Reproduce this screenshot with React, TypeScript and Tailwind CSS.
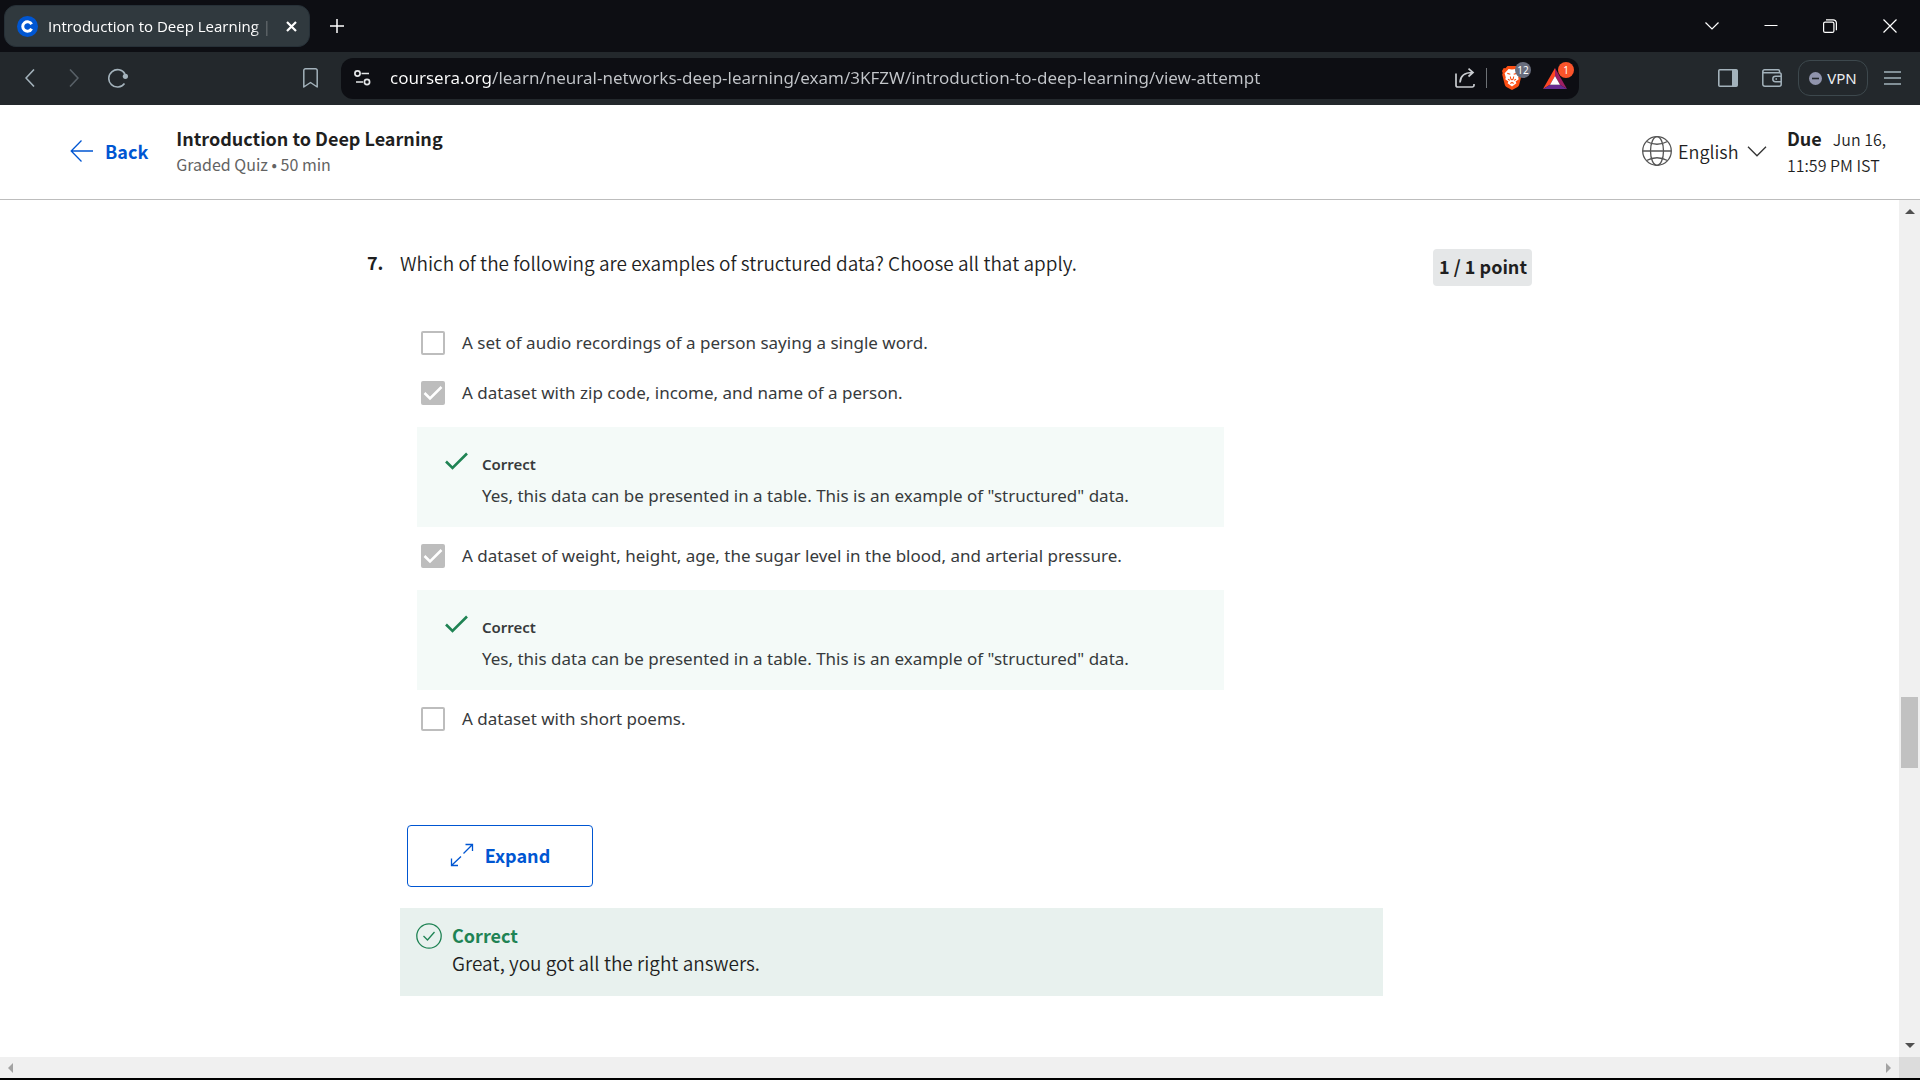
import React from "react";

function CourseraMark() {
  return (
    <svg viewBox="0 0 21 21" className="size-[21px] shrink-0" aria-hidden="true">
      <circle cx="10.500" cy="10.500" r="10.500" fill="#0056d2" />
      <path d="M14.600 8.300A4.700 4.700 0 1 0 14.600 12.700" fill="none" stroke="#fff" strokeWidth="3" />
    </svg>
  );
}

function TabStrip() {
  return (
    <div className="flex h-[52px] shrink-0 items-center bg-[#0d0e13] text-white">
      <div className="ml-1 flex h-[42px] w-[306px] items-center rounded-xl border border-[#263037] bg-[#30393e] pr-1 pl-3">
        <CourseraMark />
        <span className="ml-[10px] w-[222px] overflow-hidden font-['Open_Sans',sans-serif] text-[15px] leading-5 whitespace-nowrap [mask-image:linear-gradient(to_right,#000_205px,transparent_224px)]">
          Introduction to Deep Learning | Coursera
        </span>
        <button type="button" aria-label="Close tab" className="ml-auto grid size-7 place-items-center">
          <svg viewBox="0 0 11 11" className="size-[11px]" fill="none" stroke="currentColor" strokeWidth="2.200">
            <path d="M1 1l9 9M10 1L1 10" />
          </svg>
        </button>
      </div>
      <button type="button" aria-label="New tab" className="ml-[11px] grid size-8 place-items-center">
        <svg viewBox="0 0 14 14" className="size-[14px]" fill="none" stroke="currentColor" strokeWidth="1.500">
          <path d="M7 0v14M0 7h14" />
        </svg>
      </button>
      <div className="ml-auto flex items-center">
        <button type="button" aria-label="Search tabs" className="grid h-10 w-[59px] place-items-center">
          <svg viewBox="0 0 14 14" className="size-[14px]" fill="none" stroke="currentColor" strokeWidth="1.200">
            <path d="M.5 3.500L7 10l6.500-6.500" />
          </svg>
        </button>
        <button type="button" aria-label="Minimize" className="grid h-10 w-[59px] place-items-center">
          <svg viewBox="0 0 14 14" className="size-[14px]" stroke="currentColor" strokeWidth="1">
            <path d="M0.500 6.500h13" />
          </svg>
        </button>
        <button type="button" aria-label="Restore" className="grid h-10 w-[59px] place-items-center">
          <svg viewBox="0 0 14 14" className="size-[14px]" fill="none" stroke="currentColor" strokeWidth="1.200">
            <rect x="0.600" y="3.100" width="10.300" height="10.300" rx="1.500" />
            <path d="M3 .8h7.200a3.200 3.200 0 0 1 3.200 3.200v7.200" />
          </svg>
        </button>
        <button type="button" aria-label="Close" className="grid h-10 w-[61px] place-items-center">
          <svg viewBox="0 0 14 14" className="size-[14px]" fill="none" stroke="currentColor" strokeWidth="1.200">
            <path d="M.5.5l13 13M13.500.5l-13 13" />
          </svg>
        </button>
      </div>
    </div>
  );
}

function BraveIcon() {
  return (
    <svg viewBox="0 0 20 24" className="h-6 w-5" aria-hidden="true">
      <path
        d="M5.500 0h9l2 2.200 1.800-.3L20 5l-.7 2 .5 1.500-2.600 10.300a4 4 0 0 1-1.600 2.300L11 23.600a1.800 1.800 0 0 1-2 0l-4.600-2.500a4 4 0 0 1-1.600-2.300L.2 8.500.700 7 0 5l1.700-3.100 1.800.3z"
        fill="#fb4f14"
      />
      <path
        d="M10 3.600l3.400-.6 4 4.200-1.200 4.300.5 1.800-3.100 2.200.8 1.800-4.400 3.100-4.400-3.100.8-1.800-3.100-2.200.5-1.800L2.600 7.200l4-4.200z"
        fill="#fff"
      />
      <path
        d="M5.300 7.400l3 .8M14.700 7.400l-3 .8M8.300 10.500l.5 2.500L10 13.800l1.200-.8.5-2.500M6 13.200l2 1.200M14 13.200l-2 1.200M8.300 17.500l1.700-1 1.700 1"
        fill="none"
        stroke="#fb4f14"
        strokeWidth="1.100"
      />
    </svg>
  );
}

function BatIcon() {
  return (
    <svg viewBox="0 0 24 21" className="h-[21px] w-6" aria-hidden="true">
      <path d="M12 0L0 21l7-4.200L12 8z" fill="#ff4724" />
      <path d="M12 0l12 21-7-4.200L12 8z" fill="#9e1f63" />
      <path d="M0 21h24l-7-4.200H7z" fill="#662d91" />
      <path d="M12 8l5 8.800H7z" fill="#fff" />
    </svg>
  );
}

function Toolbar() {
  return (
    <div className="flex h-[53px] shrink-0 items-center bg-[#23282c] pb-px text-[#a3b2bb]">
      <div className="flex items-center pl-2">
        <button type="button" aria-label="Go back" className="grid h-9 w-11 place-items-center">
          <svg viewBox="0 0 10 18" className="h-[18px] w-[10px]" fill="none" stroke="currentColor" strokeWidth="1.600">
            <path d="M9 .5L1 9l8 8.500" />
          </svg>
        </button>
        <button type="button" aria-label="Go forward" className="grid h-9 w-11 place-items-center text-[#586067]">
          <svg viewBox="0 0 10 18" className="h-[18px] w-[10px]" fill="none" stroke="currentColor" strokeWidth="1.600">
            <path d="M1 .5L9 9l-8 8.500" />
          </svg>
        </button>
        <button type="button" aria-label="Reload" className="grid h-9 w-11 place-items-center">
          <svg viewBox="0 0 20 20" className="size-5" fill="none" stroke="currentColor" strokeWidth="1.600">
            <path d="M17 6A8.700 8.700 0 1 0 16.500 15.500" />
            <circle cx="17.400" cy="8.300" r="2.600" fill="currentColor" stroke="none" />
          </svg>
        </button>
      </div>
      <button type="button" aria-label="Bookmark this page" className="ml-[152px] grid h-9 w-9 place-items-center">
        <svg viewBox="0 0 15 20" className="h-5 w-[15px]" fill="none" stroke="currentColor" strokeWidth="1.500">
          <path d="M.8 2.500A1.700 1.700 0 0 1 2.500.8h10a1.700 1.700 0 0 1 1.700 1.700V19L7.500 14.500.8 19z" strokeLinejoin="round" />
        </svg>
      </button>
      <div className="ml-[13px] flex h-[41px] min-w-0 flex-1 items-center rounded-xl bg-[#0d0e13] pr-2 pl-3">
        <button type="button" aria-label="Site settings" className="grid h-8 w-[18px] shrink-0 place-items-center text-[#e4e6e8]">
          <svg viewBox="0 0 17 16" className="h-4 w-[17px]" fill="none" stroke="currentColor" strokeWidth="1.700">
            <circle cx="3.500" cy="3.500" r="2.600" />
            <path d="M7.500 3.500H15M2 12h7" />
            <circle cx="13" cy="12" r="2.600" />
          </svg>
        </button>
        <input
          type="text"
          aria-label="Address"
          readOnly
          value="coursera.org/learn/neural-networks-deep-learning/exam/3KFZW/introduction-to-deep-learning/view-attempt"
          className="ml-[19px] min-w-0 flex-1 bg-[linear-gradient(to_right,#ffffff_101px,#c3c6ca_101px)] bg-clip-text text-[17px] text-transparent outline-none"
        />
        <button type="button" aria-label="Share" className="grid h-8 w-8 place-items-center text-[#c9ccd0]">
          <svg viewBox="0 0 20 20" className="size-5" fill="none" stroke="currentColor" strokeWidth="1.700">
            <path d="M1 5.500v11.700A1.800 1.800 0 0 0 2.800 19h14.400a1.800 1.800 0 0 0 1.800-1.800V16" />
            <path d="M5 14.500C5.300 8 9 4.500 17.500 4.500M13.500.7l4.500 3.800-4.500 4" />
          </svg>
        </button>
        <span className="ml-[5px] h-5 w-px bg-[#6d7175]" />
        <button type="button" aria-label="Brave Shields, 12 blocked" className="relative ml-[9px] grid h-9 w-8 place-items-center">
          <BraveIcon />
          <span className="absolute top-[2px] left-[19px] grid size-4 place-items-center rounded-full bg-[#686d7d] text-[10px] leading-4 text-white">
            12
          </span>
        </button>
        <button type="button" aria-label="Brave Rewards, 1 new" className="relative ml-[11px] grid h-9 w-8 place-items-center">
          <BatIcon />
          <span className="absolute top-[2px] left-[19px] grid size-4 place-items-center rounded-full bg-[#fb542b] text-[10px] leading-4 text-white">
            1
          </span>
        </button>
      </div>
      <div className="flex w-[341px] shrink-0 items-center justify-end pr-[6px]">
        <button type="button" aria-label="Show sidebar" className="grid h-9 w-11 place-items-center">
          <svg viewBox="0 0 20 18" className="h-[18px] w-5" fill="none" stroke="currentColor" strokeWidth="1.600">
            <rect x=".8" y=".8" width="18.400" height="16.400" rx="1" />
            <path d="M14 1h5v16h-5z" fill="currentColor" stroke="none" />
          </svg>
        </button>
        <button type="button" aria-label="Wallet" className="grid h-9 w-11 place-items-center">
          <svg viewBox="0 0 20 18" className="h-[18px] w-5" fill="none" stroke="currentColor" strokeWidth="1.500">
            <path d="M17.500 3.500V2A1.200 1.200 0 0 0 16.300.8H2.500A1.700 1.700 0 0 0 .8 2.500v12.700a2 2 0 0 0 2 2h14.400a2 2 0 0 0 2-2V5.700a2 2 0 0 0-2-2H2.500A1.500 1.500 0 0 1 .8 2.300" />
            <path d="M19 7.300h-5.500a2.700 2.700 0 0 0 0 5.400H19M13.500 10h1.500" />
          </svg>
        </button>
        <button
          type="button"
          className="ml-1 flex h-9 w-[70px] items-center justify-center gap-[5px] rounded-xl border border-[#3d484d] text-[15px] text-[#eceef0]"
        >
          <svg viewBox="0 0 13 13" className="size-[13px]" aria-hidden="true">
            <circle cx="6.500" cy="6.500" r="6.500" fill="#9094ac" />
            <path d="M3 6.500h7" stroke="#23282c" strokeWidth="1.600" />
          </svg>
          VPN
        </button>
        <button type="button" aria-label="Menu" className="ml-[2px] grid h-9 w-11 place-items-center">
          <svg viewBox="0 0 17 14" className="h-[14px] w-[17px]" stroke="currentColor" strokeWidth="1.500">
            <path d="M0 1h17M0 7h17M0 13h17" />
          </svg>
        </button>
      </div>
    </div>
  );
}

function QuizHeader() {
  return (
    <header className="flex h-[95px] shrink-0 items-center border-b border-[#bdbdbd] bg-white pr-[22px] pb-[2px] pl-[70px] font-['Noto_Sans_CJK_JP',sans-serif] text-[#1f1f1f]">
      <a href="#back" className="flex items-center gap-3 text-lg font-bold text-[#0056d2]">
        <svg viewBox="0 0 23 22" className="h-[22px] w-[23px]" fill="none" stroke="currentColor" strokeWidth="1.300" aria-hidden="true">
          <path d="M23 11H1.500M11.500.5L1.200 11l10.300 10.500" />
        </svg>
        Back
      </a>
      <div className="ml-7">
        <h1 className="text-lg leading-[26px] font-bold">Introduction to Deep Learning</h1>
        <p className="text-base leading-[26px] text-[#636363]">Graded Quiz • 50 min</p>
      </div>
      <label className="ml-auto flex items-center">
        <svg viewBox="0 0 30 30" className="size-[30px] shrink-0" fill="none" stroke="#555" strokeWidth="1.300" aria-hidden="true">
          <circle cx="15" cy="15" r="14.300" />
          <ellipse cx="15" cy="15" rx="6.500" ry="14.300" />
          <path d="M.7 15h28.600M4.500 5.500Q15 11 25.500 5.500M4.500 24.500Q15 19 25.500 24.500" />
        </svg>
        <span className="grid items-center">
          <select
            aria-label="Language"
            className="appearance-none bg-transparent pr-7 pl-[6px] text-lg font-[350] outline-none [grid-area:1/1]"
          >
            <option>English</option>
          </select>
          <svg
            viewBox="0 0 20 11"
            className="pointer-events-none h-[11px] w-5 justify-self-end [grid-area:1/1]"
            fill="none"
            stroke="#333"
            strokeWidth="1.300"
            aria-hidden="true"
          >
            <path d="M1 .8l9 9 9-9" />
          </svg>
        </span>
      </label>
      <div className="ml-5 w-[111px] text-base leading-[26px] font-[350]">
        <div className="flex items-baseline gap-[11px]">
          <strong className="text-lg leading-[26px] font-bold">Due</strong>
          <span>Jun 16,</span>
        </div>
        <p>11:59 PM IST</p>
      </div>
    </header>
  );
}

function Option({ text, checked = false }: { text: string; checked?: boolean }) {
  return (
    <label className="flex h-[50px] items-center gap-[17px] pl-1 text-[17px] text-[#373a3c]">
      <span className="grid">
        <input
          type="checkbox"
          disabled
          checked={checked}
          readOnly
          className="size-6 appearance-none rounded-[2px] border-2 border-[#bdbdbd] bg-white checked:bg-[#bdbdbd] [grid-area:1/1]"
        />
        {checked && (
          <svg viewBox="0 0 24 24" className="size-6 [grid-area:1/1]" fill="none" stroke="#fff" strokeWidth="2.500" aria-hidden="true">
            <path d="M3.500 12l5.500 5.500L20.500 6" />
          </svg>
        )}
      </span>
      {text}
    </label>
  );
}

function Feedback() {
  return (
    <div className="mt-[9px] mb-1 flex h-[100px] max-w-[807px] gap-[13px] bg-[#f4faf8] pt-[21px] pl-7 text-[#373a3c]">
      <svg viewBox="0 0 24 18" className="mt-1 h-[18px] w-6" fill="none" stroke="#1f8354" strokeWidth="2.600" aria-hidden="true">
        <path d="M1 9.500L7.500 16 22 1.500" />
      </svg>
      <div>
        <p className="text-[15px] leading-8 font-semibold">Correct</p>
        <p className="text-[17px] leading-8">Yes, this data can be presented in a table. This is an example of "structured" data.</p>
      </div>
    </div>
  );
}

function Question() {
  return (
    <main className="min-w-0 flex-1 overflow-hidden bg-white pt-12 pl-[367px] text-[#1f1f1f]">
      <div className="flex items-start">
        <span className="w-[33px] font-['Noto_Sans_CJK_JP',sans-serif] text-lg leading-7 font-bold">7.</span>
        <h2 className="flex-1 font-['Noto_Sans_CJK_JP',sans-serif] text-[19px] leading-[30px] font-[350]">
          Which of the following are examples of structured data? Choose all that apply.
        </h2>
        <span className="mt-px mr-[367px] h-[37px] rounded-[4px] bg-[#e5e7e8] pr-[5px] pl-[6px] font-['Noto_Sans_CJK_JP',sans-serif] text-lg leading-[35px] font-bold">
          1 / 1 point
        </span>
      </div>
      <fieldset aria-label="Answers" className="mt-8 pl-[50px]">
        <Option text="A set of audio recordings of a person saying a single word." />
        <Option text="A dataset with zip code, income, and name of a person." checked />
        <Feedback />
        <Option text="A dataset of weight, height, age, the sugar level in the blood, and arterial pressure." checked />
        <Feedback />
        <Option text="A dataset with short poems." />
      </fieldset>
      <button
        type="button"
        className="mt-[81px] ml-10 flex h-[62px] w-[186px] items-center justify-center gap-[11px] rounded-[4px] border border-[#0056d2] pb-[2px] font-['Noto_Sans_CJK_JP',sans-serif] text-lg font-bold text-[#0056d2]"
      >
        <svg viewBox="0 0 24 24" className="size-6" fill="none" stroke="currentColor" strokeWidth="1.300" aria-hidden="true">
          <path d="M15.500 1.500h7V8M22.500 1.500L13.500 10.500M8 22.500H1.500v-7M1.500 22.500L11 13.500" />
        </svg>
        Expand
      </button>
      <div className="mt-[21px] mr-[516px] ml-[33px] flex h-[88px] gap-[10px] bg-[#e8f1ee] pt-[14px] pl-4 font-['Noto_Sans_CJK_JP',sans-serif]">
        <svg viewBox="0 0 26 26" className="mt-px size-[26px] shrink-0" fill="none" stroke="#1f8354" strokeWidth="1.300" aria-hidden="true">
          <circle cx="13" cy="13" r="12.200" />
          <path d="M7.500 13l4 4 7-8" />
        </svg>
        <div>
          <p className="text-lg leading-[27px] font-bold text-[#1f8354]">Correct</p>
          <p className="text-[19px] leading-7 font-[350]">Great, you got all the right answers.</p>
        </div>
      </div>
    </main>
  );
}

function VerticalScrollbar() {
  return (
    <div className="flex w-[21px] shrink-0 flex-col items-center bg-[#f0f0f0]" aria-hidden="true">
      <svg viewBox="0 0 10 5" className="mt-[9px] h-[5px] w-[10px] shrink-0" fill="#505050">
        <path d="M0 5l5-5 5 5z" />
      </svg>
      <div className="flex-[483]" />
      <div className="h-[71px] w-[17px] bg-[#c1c1c1]" />
      <div className="flex-[275]" />
      <svg viewBox="0 0 10 5" className="mb-[9px] h-[5px] w-[10px] shrink-0" fill="#505050">
        <path d="M0 0l5 5 5-5z" />
      </svg>
    </div>
  );
}

function HorizontalScrollbar() {
  return (
    <div className="flex h-[21px] shrink-0 bg-[#f0f0f0]" aria-hidden="true">
      <div className="flex flex-1 items-center justify-between px-2">
        <svg viewBox="0 0 5 10" className="h-[10px] w-[5px]" fill="#a3a3a3">
          <path d="M5 0v10L0 5z" />
        </svg>
        <svg viewBox="0 0 5 10" className="h-[10px] w-[5px]" fill="#a3a3a3">
          <path d="M0 0v10l5-5z" />
        </svg>
      </div>
      <div className="w-[21px] bg-[#dcdcdc]" />
    </div>
  );
}

export default function App() {
  return (
    <div className="flex h-screen flex-col overflow-hidden border-b-2 border-black bg-white font-['Noto_Sans','Open_Sans',sans-serif]">
      <TabStrip />
      <Toolbar />
      <QuizHeader />
      <div className="flex min-h-0 flex-1">
        <Question />
        <VerticalScrollbar />
      </div>
      <HorizontalScrollbar />
    </div>
  );
}
